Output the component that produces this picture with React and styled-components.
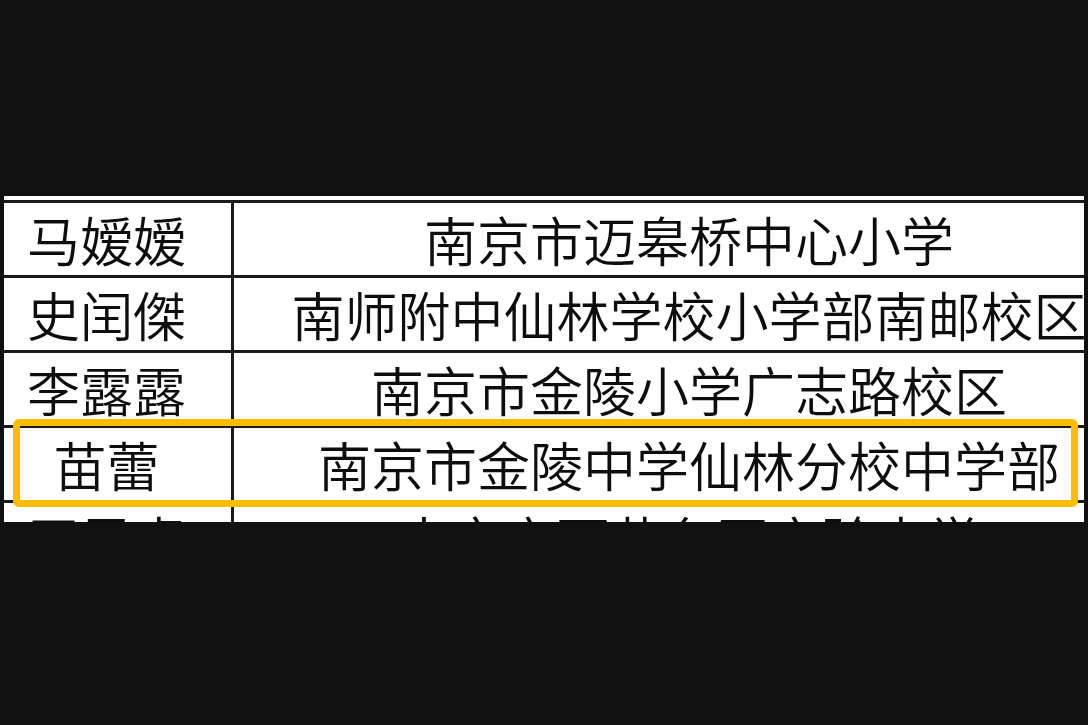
import styled, { createGlobalStyle } from 'styled-components'

const GlobalStyle = createGlobalStyle`
    html, body {
        margin: 0;
        padding: 0;
        background: #111111;
    }
`

const Page = styled.div`
    width: 1088px;
    height: 725px;
    box-sizing: border-box;
    padding: 196px 0 0 4px;
    background: #111111;
    font-family: "Noto Sans CJK SC", "Noto Sans", sans-serif;
`

const Viewport = styled.div`
    position: relative;
    width: 1080px;
    height: 326px;
    overflow: hidden;
    background: #ffffff;
`

const Table = styled.div`
    width: 1140px;
    margin-top: 4px;
    border-top: 3px solid #1a1a1a;
`

const Row = styled.div`
    display: grid;
    grid-template-columns: 230px 910px;
    height: 75px;
    box-sizing: border-box;
    border-bottom: 3px solid #1a1a1a;
`

const Cell = styled.div`
    display: flex;
    justify-content: center;
    box-sizing: border-box;
    font-size: 53px;
    font-weight: 350;
    line-height: 72px;
    color: #0d0d0d;
    white-space: nowrap;
    ${({ $name }) => $name && `
    border-right: 3px solid #1a1a1a;
    padding-right: 22px;
    `}
`

const Highlight = styled.div`
    position: absolute;
    left: 9px;
    top: 223px;
    width: 1065px;
    height: 88px;
    box-sizing: border-box;
    border: 7px solid #ffbd00;
    border-radius: 6px;
    pointer-events: none;
`

const rows = [
    { name: '马嫒嫒', school: '南京市迈皋桥中心小学' },
    { name: '史闰傑', school: '南师附中仙林学校小学部南邮校区' },
    { name: '李露露', school: '南京市金陵小学广志路校区' },
    { name: '苗蕾', school: '南京市金陵中学仙林分校中学部' },
    { name: '王思卓', school: '南京市雨花台区实验中学' },
]

const App = () => (
    <>
        <GlobalStyle />
        <Page>
            <Viewport>
                <Table>
                    {rows.map(({ name, school }) => (
                        <Row key={name}>
                            <Cell $name>{name}</Cell>
                            <Cell>{school}</Cell>
                        </Row>
                    ))}
                </Table>
                <Highlight />
            </Viewport>
        </Page>
    </>
)

export default App
